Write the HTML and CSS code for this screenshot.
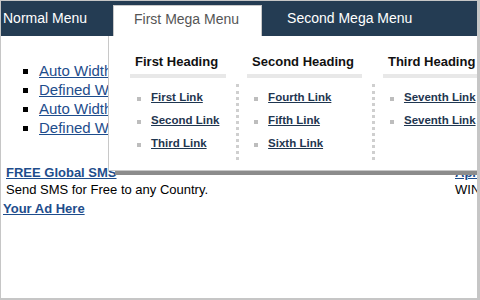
FILE: index.html
```html
<!DOCTYPE html>
<html lang="en">
<head>
    <meta charset="UTF-8">
    <title>Mega Menu Demo</title>
    <link rel="stylesheet" href="styles.css">
</head>
<body>

    <div class="frame">
        <ul class="nav">
            <li class="nav-item nav-normal"><a href="#" class="nav-link">Normal Menu</a></li>
            <li class="nav-item nav-tab">
                <a href="#" class="nav-link">First Mega Menu</a>
                <!-- dropdown panel for the open tab -->
                <div class="mega">
                    <div class="mega-col">
                        <h3 class="mega-heading">First Heading</h3>
                        <ul class="mega-links">
                            <li><a href="#">First Link</a></li>
                            <li><a href="#">Second Link</a></li>
                            <li><a href="#">Third Link</a></li>
                        </ul>
                    </div>
                    <div class="mega-sep"></div>
                    <div class="mega-col">
                        <h3 class="mega-heading">Second Heading</h3>
                        <ul class="mega-links">
                            <li><a href="#">Fourth Link</a></li>
                            <li><a href="#">Fifth Link</a></li>
                            <li><a href="#">Sixth Link</a></li>
                        </ul>
                    </div>
                    <div class="mega-sep"></div>
                    <div class="mega-col">
                        <h3 class="mega-heading">Third Heading</h3>
                        <ul class="mega-links">
                            <li><a href="#">Seventh Link</a></li>
                            <li><a href="#">Seventh Link</a></li>
                        </ul>
                    </div>
                </div>
            </li>
            <li class="nav-item nav-last"><a href="#" class="nav-link">Second Mega Menu</a></li>
        </ul>

        <ul class="page-list">
            <li><a href="#">Auto Width Menu</a></li>
            <li><a href="#">Defined Width Menu</a></li>
            <li><a href="#">Auto Width Mega Menu</a></li>
            <li><a href="#">Defined Width Mega Menu</a></li>
        </ul>

        <div class="ads">
            <div class="ad-cell ad-left">
                <a href="#" class="ad-title">FREE Global SMS</a><br>
                Send SMS for Free to any Country.
            </div>
            <div class="ad-cell">
                <a href="#" class="ad-title">April Fools Gifts</a><br>
                WIN a Free Gift Hamper
            </div>
        </div>
        <a href="#" class="ad-here">Your Ad Here</a>
    </div>

</body>
</html>
```

FILE: styles.css
```css
body {
    margin: 0;
    font-family: "Liberation Sans", Arial, sans-serif;
    background: #fff;
}
.frame {
    width: 480px;
    height: 300px;
    box-sizing: border-box;
    border: 1px solid #c6c6c6;
    border-right-width: 3px;
    border-bottom-width: 2px;
    overflow: hidden;
    position: relative;
}

/* --- Top navigation --- */
.nav {
    display: flex;
    margin: 0;
    padding: 0;
    list-style: none;
    background-color: #243c53;
    height: 35px;
}
.nav-link {
    display: block;
    color: #fff;
    font-size: 14px;
    line-height: 35px;
    text-decoration: none;
    white-space: nowrap;
}
.nav-normal .nav-link { padding: 0 26px 0 2px; }
.nav-last .nav-link { padding-left: 25px; }
.nav-tab {
    position: relative;
    z-index: 10;
    margin-top: 4px;
    background: #fff;
    border: 1px solid #c8c8c8;
    border-bottom: none;
}
.nav-tab .nav-link {
    color: #555;
    line-height: 26px;
    padding: 0 22px 4px 20px;
}

/* --- Mega dropdown --- */
.mega {
    position: absolute;
    top: 100%;
    left: -6px;
    width: 420px;
    display: flex;
    background: #fff;
    border-left: 1px solid #c8c8c8;
    border-bottom: 1px solid #c8c8c8;
    box-shadow: 7px 4px 0 #8c8c8c;
    padding: 18px 0 10px 21px;
}
.mega-heading {
    margin: 0;
    font-size: 13px;
    font-weight: bold;
    line-height: 16px;
    color: #111;
    padding: 0 8px 4px 5px;
    border-bottom: 4px solid #e8e8e8;
    white-space: nowrap;
}
.mega-links {
    list-style: none;
    margin: 0;
    padding: 8px 0 0;
}
.mega-links li {
    line-height: 23px;
    padding-left: 7px;
    font-size: 11.5px;
    font-weight: bold;
    white-space: nowrap;
}
.mega-links li::before {
    content: "";
    display: inline-block;
    width: 4px;
    height: 4px;
    background: #bdbdbd;
    margin-right: 10px;
    vertical-align: 0;
}
.mega-links a { color: #1f3650; }
.mega-sep {
    align-self: flex-start;
    margin: 30px 8px 0 10px;
    height: 76px;
    border-left: 3px dotted #cfcfcf;
}

/* --- Page body --- */
.page-list {
    margin: 25px 0 0;
    padding-left: 38px;
    list-style: square;
    font-size: 15px;
    line-height: 19px;
}
.page-list a { color: #1e4d8c; }

.ads {
    display: flex;
    margin-top: 27px;
    font-size: 13px;
    line-height: 17px;
    white-space: nowrap;
}
.ad-cell { padding-left: 5px; }
.ad-left { width: 449px; flex-shrink: 0; box-sizing: border-box; }
.ad-title { font-weight: bold; color: #1e4d8c; }
.ad-here {
    display: block;
    margin: 2px 0 0 2px;
    font-size: 13px;
    font-weight: bold;
    line-height: 17px;
    color: #1e4d8c;
}
```
